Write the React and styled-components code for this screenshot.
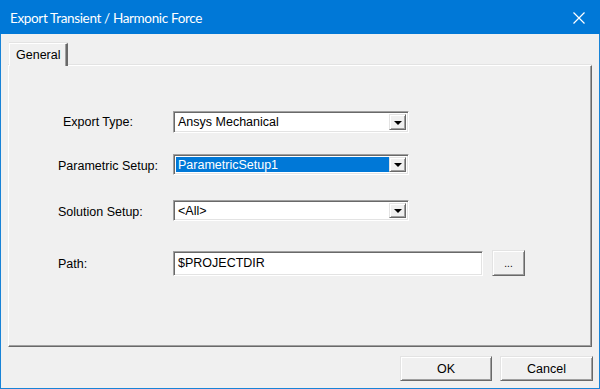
import React from "react";
import styled, { createGlobalStyle } from "styled-components";

const Global = createGlobalStyle`
  html, body { margin: 0; padding: 0; background: #f0f0f0; }
  * { box-sizing: border-box; }
`;

const Frame = styled.div`
  width: 600px;
  height: 389px;
  display: flex;
  flex-direction: column;
  background: #f0f0f0;
  border: 1px solid #1883d7;
  border-top: none;
  font-family: "Liberation Sans", Arial, sans-serif;
  font-size: 12.5px;
  color: #000;
`;

const TitleBar = styled.div`
  height: 34px;
  margin: 0 -1px;
  background: #0078d7;
  color: #fff;
  display: flex;
  align-items: center;
  justify-content: space-between;
  padding: 2px 10px 0 10px;
  font-family: Lato, "Noto Sans", sans-serif;
  font-size: 13.5px;
  letter-spacing: -0.35px;
`;

const CloseBtn = styled.div`
  width: 14px;
  height: 14px;
  margin-right: 4px;
  display: flex;
`;

const Body = styled.div`
  flex: 1;
  display: flex;
  flex-direction: column;
  padding: 9px 7px 0 7px;
`;

const TabStrip = styled.div`
  display: flex;
  height: 22px;
  padding-left: 1px;
`;

const Tab = styled.div`
  width: 59px;
  height: 23px;
  background: #f0f0f0;
  border-top: 1px solid #fff;
  border-left: 1px solid #fff;
  border-right: 2px solid #696969;
  box-shadow: inset -1px 0 0 #a0a0a0, 0 -1px 0 #e3e3e3;
  padding: 4px 0 0 6px;
  position: relative;
  z-index: 1;
`;

const Panel = styled.div`
  height: 282px;
  border-top: 1px solid #fff;
  border-left: 1px solid #fff;
  border-right: 1px solid #696969;
  border-bottom: 1px solid #696969;
  box-shadow: inset -1px -1px 0 #a0a0a0, 0 -1px 0 #e3e3e3;
  padding: 0 0 0 49px;
  display: flex;
  flex-direction: column;
`;

const Row = styled.div`
  display: flex;
  align-items: center;
  margin-top: ${(p) => p.$top}px;
`;

const Label = styled.div`
  width: 115px;
  padding-left: ${(p) => p.$indent || 0}px;
  padding-top: ${(p) => p.$drop || 0}px;
`;

const Sunken = styled.div`
  display: flex;
  align-items: center;
  width: ${(p) => p.$w}px;
  height: ${(p) => p.$h}px;
  background: #fff;
  border-top: 1px solid #a0a0a0;
  border-left: 1px solid #a0a0a0;
  border-right: 1px solid #fff;
  border-bottom: 1px solid #fff;
  box-shadow: inset 1px 1px 0 #696969, inset -1px -1px 0 #e3e3e3;
  padding: 2px;
`;

const Value = styled.div`
  flex: 1;
  height: 100%;
  display: flex;
  align-items: ${(p) => (p.$top ? "flex-start" : "center")};
  padding-top: ${(p) => (p.$top ? 2 : 0)}px;
  padding-left: 2px;
  background: ${(p) => (p.$selected ? "#0078d7" : "transparent")};
  color: ${(p) => (p.$selected ? "#fff" : "#000")};
`;

const DropBtn = styled.div`
  width: 17px;
  height: 100%;
  background: #f0f0f0;
  border-top: 1px solid #e3e3e3;
  border-left: 1px solid #e3e3e3;
  border-right: 1px solid #696969;
  border-bottom: 1px solid #696969;
  box-shadow: inset 1px 1px 0 #fff, inset -1px -1px 0 #a0a0a0;
  display: flex;
  align-items: center;
  justify-content: center;
`;

const Arrow = styled.div`
  width: 0;
  height: 0;
  border-left: 4px solid transparent;
  border-right: 4px solid transparent;
  border-top: 4px solid #000;
  margin-top: 1px;
`;

const Button = styled.div`
  width: ${(p) => p.$w}px;
  height: ${(p) => p.$h}px;
  margin-left: ${(p) => p.$ml || 0}px;
  background: #f0f0f0;
  border-top: 1px solid #e3e3e3;
  border-left: 1px solid #e3e3e3;
  border-right: 1px solid #696969;
  border-bottom: 1px solid #696969;
  box-shadow: inset 1px 1px 0 #fff, inset -1px -1px 0 #a0a0a0;
  display: flex;
  align-items: center;
  justify-content: center;
  font-size: ${(p) => p.$fs || 12.5}px;
  color: ${(p) => p.$color || "#000"};
`;

const Footer = styled.div`
  display: flex;
  justify-content: flex-end;
  padding-top: 9px;
  margin-right: -1px;
`;

const Combo = ({ w, h, value, selected }) => (
  <Sunken $w={w} $h={h}>
    <Value $selected={selected}>{value}</Value>
    <DropBtn>
      <Arrow />
    </DropBtn>
  </Sunken>
);

export default function App() {
  return (
    <>
      <Global />
      <Frame>
        <TitleBar>
          <span>Export Transient / Harmonic Force</span>
          <CloseBtn>
            <svg width="14" height="14" viewBox="0 0 14 14">
              <path d="M1.5 1.5 L12.5 12.5 M12.5 1.5 L1.5 12.5" stroke="#fff" strokeWidth="1.2" fill="none" />
            </svg>
          </CloseBtn>
        </TitleBar>
        <Body>
          <TabStrip>
            <Tab>General</Tab>
          </TabStrip>
          <Panel>
            <Row $top={45}>
              <Label $indent={5}>Export Type:</Label>
              <Combo w={236} h={22} value="Ansys Mechanical" />
            </Row>
            <Row $top={21}>
              <Label $drop={2}>Parametric Setup:</Label>
              <Combo w={236} h={21} value="ParametricSetup1" selected />
            </Row>
            <Row $top={25}>
              <Label $drop={2}>Solution Setup:</Label>
              <Combo w={236} h={21} value="<All>" />
            </Row>
            <Row $top={29}>
              <Label $drop={1}>Path:</Label>
              <Sunken $w={310} $h={25}>
                <Value $top>$PROJECTDIR</Value>
              </Sunken>
              <Button $w={33} $h={26} $ml={9} $fs={10}>...</Button>
            </Row>
          </Panel>
          <Footer>
            <Button $w={92} $h={25}>OK</Button>
            <Button $w={93} $h={25} $ml={8}>Cancel</Button>
          </Footer>
        </Body>
      </Frame>
    </>
  );
}
